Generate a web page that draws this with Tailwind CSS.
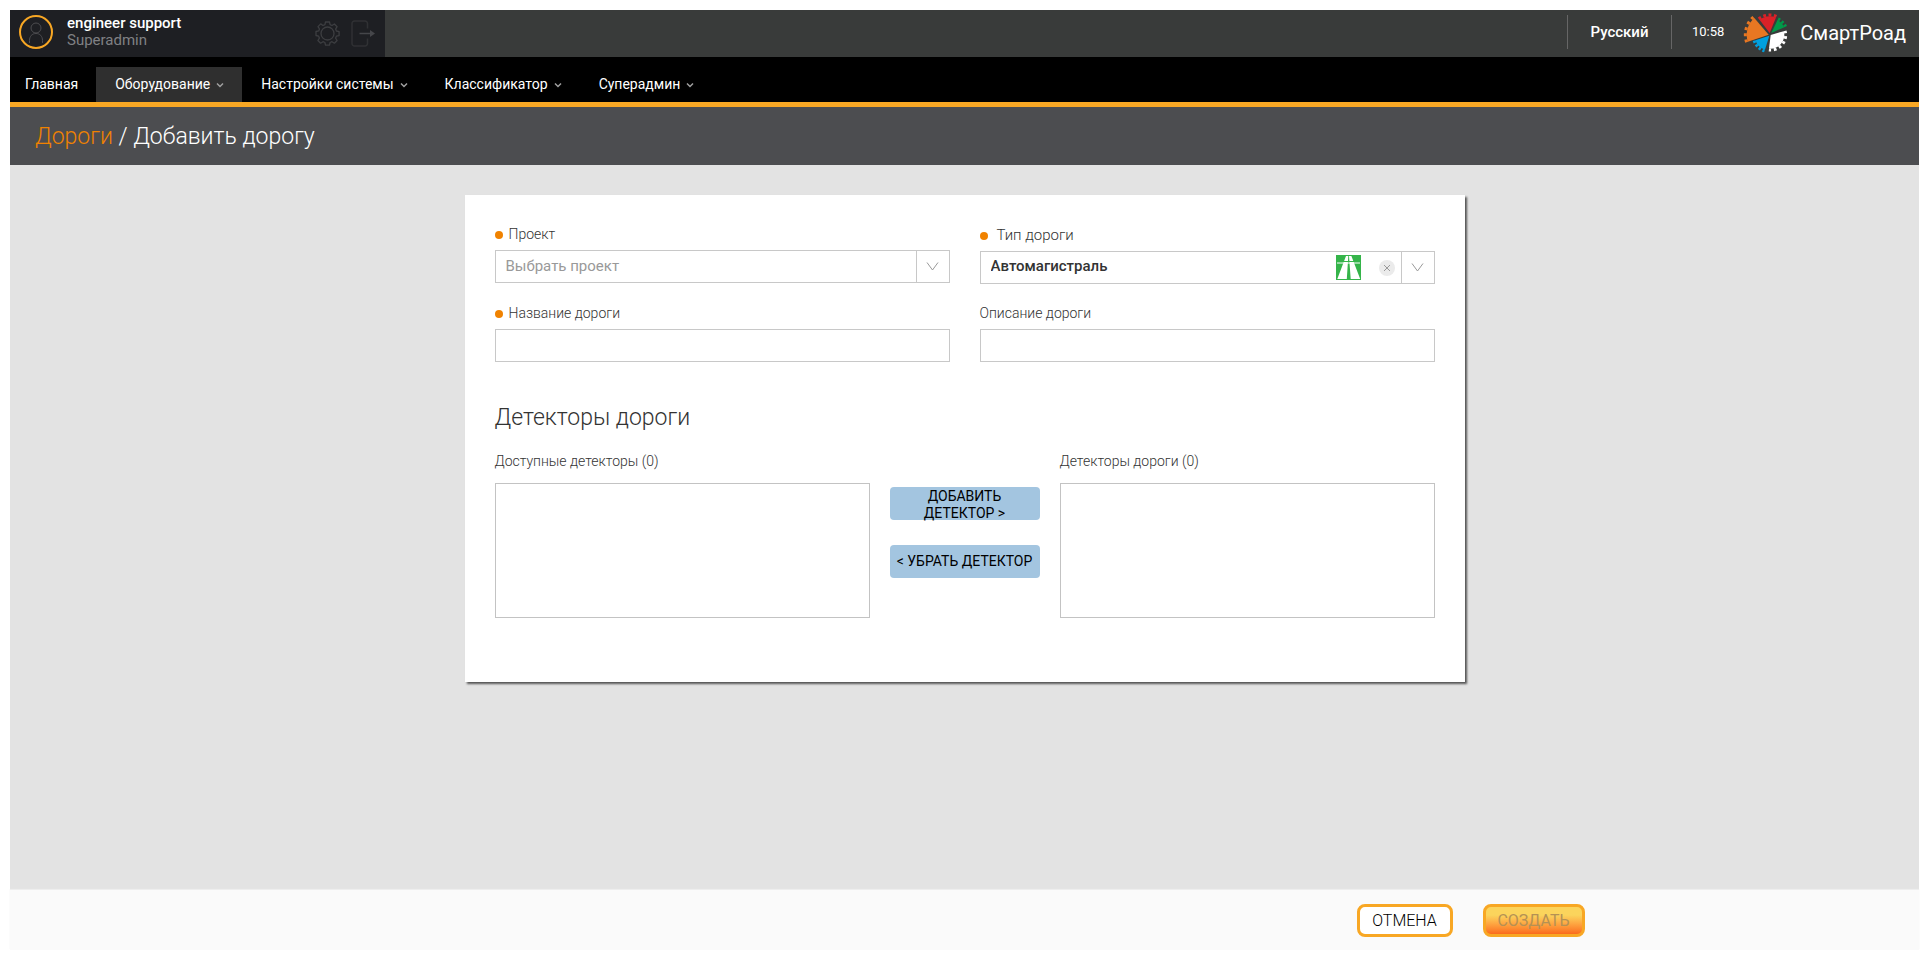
<!DOCTYPE html>
<html lang="ru">
<head>
<meta charset="utf-8">
<meta name="viewport" content="width=device-width, initial-scale=1">
<title>СмартРоад – Добавить дорогу</title>
<script src="https://cdn.jsdelivr.net/npm/@tailwindcss/browser@4"></script>
</head>
<body class="flex min-h-screen flex-col bg-white pt-[10px] pr-[11px] pb-[9px] pl-[10px] font-['Roboto',sans-serif] text-sm text-[#333]">
  <header>
    <div class="flex h-[47px] items-stretch bg-[#393b3a] text-white">
      <div class="flex w-[375px] items-center bg-[#1e1f23] pr-[10px] pl-[9px]">
        <svg class="mb-[3px] h-[34px] w-[34px]" viewBox="0 0 34 34" fill="none">
          <circle cx="17" cy="17" r="16" stroke="#f8a724" stroke-width="2"/>
          <g stroke="#4d4d50" stroke-width="1"><circle cx="17" cy="13" r="5"/><path d="M10.500 28v-2.500c0-4.200 2.500-7 6.500-7s6.500 2.800 6.500 7V28"/></g>
        </svg>
        <div class="mb-1 ml-[14px] flex-1 text-[15px] leading-[17px]">
          <div class="font-medium">engineer support</div>
          <div class="text-[#808184]">Superadmin</div>
        </div>
        <button type="button" aria-label="Настройки" class="mr-[11px]">
          <svg class="h-[25px] w-[25px]" viewBox="0 0 25 25" fill="none" stroke="#3d3e41" stroke-width="1.300">
            <circle cx="12.500" cy="12.500" r="6.500"/>
            <path stroke-linejoin="round" d="M10.500 1h4l.6 2.700 1.900.8 2.400-1.500 2.700 2.700-1.500 2.400.8 1.900 2.700.6v4l-2.700.6-.8 1.900 1.500 2.400-2.700 2.700-2.400-1.500-1.900.8-.6 2.700h-4l-.6-2.700-1.900-.8-2.400 1.500-2.700-2.700 1.500-2.400-.8-1.900L1 14.500v-4l2.700-.6.8-1.900L3 5.600l2.700-2.700L8 4.500l1.900-.8z"/>
          </svg>
        </button>
        <button type="button" aria-label="Выйти">
          <svg class="h-[27px] w-[24px]" viewBox="0 0 24 27" fill="none" stroke="#303134" stroke-width="1.500">
            <path d="M16.500 8.500V3.500a2.500 2.500 0 0 0-2.500-2.500H3.500A2.500 2.500 0 0 0 1 3.500v20A2.500 2.500 0 0 0 3.500 26H14a2.500 2.500 0 0 0 2.500-2.500V18.500"/>
            <path stroke="#45464a" d="M8.500 13.500h13"/><path fill="#45464a" stroke="none" d="m19 10 5 3.500-5 3.500z"/>
          </svg>
        </button>
      </div>
      <div class="flex flex-1 items-start justify-end pt-[5px]">
        <button type="button" class="h-[34px] w-[105px] border-x border-[#666] pt-px text-[15px] font-medium">Русский</button>
        <time class="ml-[20px] text-[13px] leading-[34px]">10:58</time>
        <a href="#" class="-mt-[5px] ml-[17px] flex h-[47px] items-center">
          <svg class="mb-1 h-[44px] w-[49px]" viewBox="574 28 147 132" fill="none" stroke-width="9" aria-hidden="true">
            <path fill="#e87722" d="M657 102 614 52A66 66 0 0 0 594.600 123.400z"/>
            <path stroke="#e87722" stroke-dasharray="9 9.500" d="M611.200 49.100A70 70 0 0 0 590.800 124.700"/>
            <path fill="#da2128" d="M660 97 629.500 57.500A50 50 0 0 1 679 50.800z"/>
            <path stroke="#da2128" stroke-dasharray="8.500 7.500" d="M627 54.300A54 54 0 0 1 680.500 47"/>
            <path fill="#009a49" d="M665 97 683.500 58.300A43 43 0 0 1 704 79.400z"/>
            <path stroke="#009a49" stroke-dasharray="7 6" d="M685.200 54.700A47 47 0 0 1 707.800 77.700"/>
            <path fill="#fff" d="M663 103 702.400 91.500A41 41 0 0 1 658 143.700z"/>
            <path stroke="#fff" stroke-dasharray="8 8.200" d="M706.200 90.400A45 45 0 0 1 657.600 147.700"/>
            <path fill="#00a0df" d="M659 105 617.200 118.600A44 44 0 0 0 645.800 147z"/>
            <path stroke="#00a0df" stroke-dasharray="7.200 5.600" d="M613.400 119.900A48 48 0 0 0 644.600 150.800"/>
          </svg>
          <span class="ml-[10px] pr-[13px] text-[20px]">СмартРоад</span>
        </a>
      </div>
    </div>
    <nav class="flex h-[50px] items-end border-b-[5px] border-[#f8a724] bg-black text-sm leading-[35px] text-white">
      <a href="#" class="h-[35px] pr-[18px] pl-[15px]">Главная</a>
      <a href="#" class="flex h-[35px] items-center gap-[6px] bg-[#2f2f2f] pr-[18px] pl-[19px]">Оборудование<svg class="h-[8px] w-[8px]" viewBox="0 0 8 8" fill="none" stroke="#a0a0a0" stroke-width="1.500"><path d="m1 2.500 3 3 3-3"/></svg></a>
      <a href="#" class="flex h-[35px] items-center gap-[6px] pr-[18px] pl-[19px]">Настройки системы<svg class="h-[8px] w-[8px]" viewBox="0 0 8 8" fill="none" stroke="#a0a0a0" stroke-width="1.500"><path d="m1 2.500 3 3 3-3"/></svg></a>
      <a href="#" class="flex h-[35px] items-center gap-[6px] pr-[18px] pl-[19px]">Классификатор<svg class="h-[8px] w-[8px]" viewBox="0 0 8 8" fill="none" stroke="#a0a0a0" stroke-width="1.500"><path d="m1 2.500 3 3 3-3"/></svg></a>
      <a href="#" class="flex h-[35px] items-center gap-[6px] pr-[18px] pl-[19px]">Суперадмин<svg class="h-[8px] w-[8px]" viewBox="0 0 8 8" fill="none" stroke="#a0a0a0" stroke-width="1.500"><path d="m1 2.500 3 3 3-3"/></svg></a>
    </nav>
    <h1 class="h-[58px] bg-[#4c4d50] pl-[25px] text-[23px] leading-[60px] font-light text-white"><a href="#" class="text-[#f08200]">Дороги</a> / Добавить дорогу</h1>
  </header>

  <main class="flex-1 bg-[#e3e3e3] pt-[30px]">
    <form id="road" class="mx-auto max-w-[1000px] bg-white px-[30px] pt-[30px] pb-[64px] shadow-[2px_2px_2px_#555]">
      <div class="grid grid-cols-2 gap-x-[30px] gap-y-[20px]">
        <div>
          <label for="project" class="flex h-[25px] items-start gap-[6px] leading-[18px] font-light"><span class="mt-[6px] h-2 w-2 rounded-full bg-[#f08200]"></span>Проект</label>
          <div class="flex h-[33px] border border-[#c8c8c8]">
            <select id="project" class="min-w-0 flex-1 appearance-none px-[10px] text-[15px] text-[#999]"><option>Выбрать проект</option></select>
            <span class="flex w-[33px] items-center justify-center border-l border-[#c8c8c8]"><svg class="h-[9px] w-[13px]" viewBox="0 0 13 9" fill="none" stroke="#999"><path d="m1 .5 5.500 7.500L12 .5"/></svg></span>
          </div>
        </div>
        <div>
          <label for="type" class="flex h-[26px] items-start gap-[9px] text-[15px] leading-[20px] font-light"><span class="mt-[7px] h-2 w-2 rounded-full bg-[#f08200]"></span>Тип дороги</label>
          <div class="flex h-[33px] items-center border border-[#c8c8c8]">
            <select id="type" class="h-full min-w-0 flex-1 appearance-none px-[10px] pb-[2px] text-[15px] font-medium text-[#333]"><option>Автомагистраль</option></select>
            <svg class="h-[25px] w-[25px]" viewBox="0 0 25 25" aria-hidden="true"><path fill="#35b44a" d="M0 0h25v25H0z"/><path fill="#fff" d="M10 1h2.300l-1.500 23H1.300zM13 1h2.400l8.800 23h-9.500z"/><path stroke="#35b44a" d="M5 6.500h15"/><path stroke="#fff" d="M1 8h23"/></svg>
            <button type="button" aria-label="Очистить" class="mr-[6px] ml-[18px] flex h-4 w-4 items-center justify-center rounded-full bg-[#ebebeb]"><svg class="h-[6px] w-[6px]" viewBox="0 0 6 6" stroke="#999"><path d="m0 0 6 6M6 0 0 6"/></svg></button>
            <span class="flex h-full w-[33px] items-center justify-center border-l border-[#c8c8c8]"><svg class="h-[9px] w-[13px]" viewBox="0 0 13 9" fill="none" stroke="#999"><path d="m1 .5 5.500 7.500L12 .5"/></svg></span>
          </div>
        </div>
        <div>
          <label for="name" class="flex h-[25px] items-start gap-[6px] leading-[18px] font-light"><span class="mt-[6px] h-2 w-2 rounded-full bg-[#f08200]"></span>Название дороги</label>
          <input id="name" type="text" class="block h-[33px] w-full border border-[#c8c8c8] px-[10px]">
        </div>
        <div>
          <label for="desc" class="flex h-[25px] items-start leading-[18px] font-light">Описание дороги</label>
          <input id="desc" type="text" class="block h-[33px] w-full border border-[#c8c8c8] px-[10px]">
        </div>
      </div>
      <h2 class="mt-[40px] text-[23px] leading-[32px] font-light">Детекторы дороги</h2>
      <div class="mt-[18px] flex gap-5">
        <div class="flex-1">
          <label for="available" class="block h-[31px] leading-[18px] font-light">Доступные детекторы (0)</label>
          <select id="available" multiple class="block h-[135px] w-full border border-[#c3c3c3]"></select>
        </div>
        <div class="flex w-[150px] flex-col gap-[25px] pt-[35px] text-black">
          <button type="button" class="h-[33px] rounded bg-[#a3c5e0] px-1 pt-px leading-[17px]">ДОБАВИТЬ ДЕТЕКТОР &gt;</button>
          <button type="button" class="h-[33px] rounded bg-[#a3c5e0] px-1 leading-[17px]">&lt; УБРАТЬ ДЕТЕКТОР</button>
        </div>
        <div class="flex-1">
          <label for="assigned" class="block h-[31px] leading-[18px] font-light">Детекторы дороги (0)</label>
          <select id="assigned" multiple class="block h-[135px] w-full border border-[#c3c3c3]"></select>
        </div>
      </div>
    </form>
  </main>

  <footer class="bg-[#fafafa] pt-[14px] pb-[13px] shadow-[0_-1px_1px_#eee]">
    <div class="mx-auto flex max-w-[1240px] justify-end gap-[30px] text-[16px]">
      <button type="button" class="h-[33px] w-[96px] rounded-lg border-[3px] border-[#f8a724] bg-white leading-[27px] font-light text-black">ОТМЕНА</button>
      <button type="submit" form="road" disabled class="h-[33px] w-[102px] rounded-lg border-[3px] border-[#f8a724] bg-linear-to-b from-[#fbd45c] from-30% to-[#fa6a1c] leading-[27px] text-[#b59154]">СОЗДАТЬ</button>
    </div>
  </footer>
</body>
</html>
